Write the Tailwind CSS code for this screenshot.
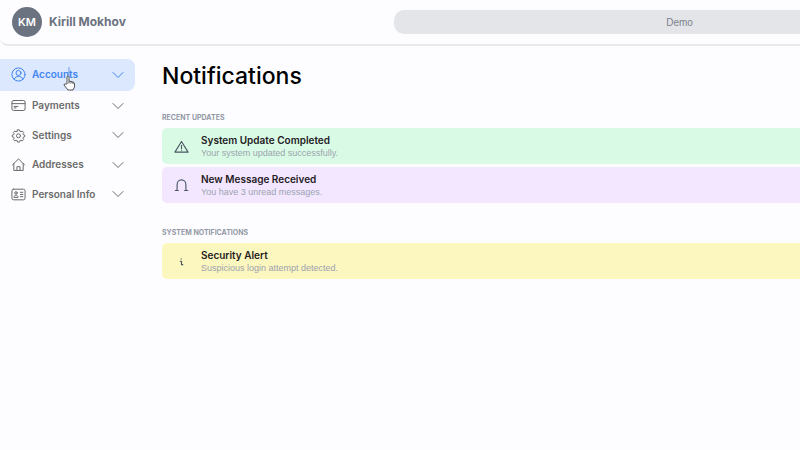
<!DOCTYPE html>
<html lang="en">
<head>
<meta charset="utf-8">
<meta name="viewport" content="width=device-width, initial-scale=1">
<title>Notifications</title>
<script src="https://cdn.jsdelivr.net/npm/@tailwindcss/browser@4"></script>
</head>
<body class="min-h-screen overflow-x-hidden bg-[#fdfdff] font-['Inter',sans-serif]">
<header class="flex h-[46px] items-center overflow-hidden rounded-bl-lg border-b-2 border-b-[#e8e9ed] pl-3">
  <div class="flex w-[382px] shrink-0 items-center gap-[7px]">
    <span class="flex size-[30px] items-center justify-center rounded-full bg-[#6b7280] text-[11px] font-semibold text-white">KM</span>
    <span class="text-[12px] font-bold text-[#6b7280]">Kirill Mokhov</span>
  </div>
  <button type="button" class="h-6 w-[571px] shrink-0 rounded-[10px] bg-[#e4e5e9] text-center font-['Liberation_Sans',sans-serif] text-[10px] text-[#7b818e]">Demo</button>
</header>
<div class="flex pt-[13px]">
  <nav class="w-[135px] shrink-0 text-[10px] font-semibold text-[#6b6b6b]" aria-label="Main">
    <button type="button" class="flex h-8 w-full cursor-pointer items-center rounded-r-lg bg-[#dbe8fe] pr-[11px] pb-px pl-[11px] text-[#4285f0]">
      <svg class="mr-[6px] size-[15px]" viewBox="0 0 24 24" fill="none" stroke="currentColor" stroke-width="1.6" stroke-linecap="round" stroke-linejoin="round"><circle cx="12" cy="12" r="10.5"/><circle cx="12" cy="9.5" r="4"/><path d="M5 19.500c1.500-3 4-4.500 7-4.500s5.500 1.500 7 4.500"/></svg>
      <span>Accounts</span>
      <svg class="ml-auto h-2 w-3" viewBox="0 0 12 8" fill="none" stroke="currentColor" stroke-linecap="round" stroke-linejoin="round"><path d="M1 1.500l5 5 5-5"/></svg>
    </button>
    <button type="button" class="flex h-[29px] w-full cursor-pointer items-center pr-[11px] pl-[11px]">
      <svg class="mr-[6px] size-[15px]" viewBox="0 0 24 24" fill="none" stroke="currentColor" stroke-width="1.6" stroke-linecap="round" stroke-linejoin="round"><rect x="1.500" y="4" width="21" height="16" rx="2.500"/><path d="M1.500 9h21M5 13.500h6M5 16h3"/></svg>
      <span>Payments</span>
      <svg class="ml-auto h-2 w-3" viewBox="0 0 12 8" fill="none" stroke="currentColor" stroke-linecap="round" stroke-linejoin="round"><path d="M1 1.500l5 5 5-5"/></svg>
    </button>
    <button type="button" class="flex h-[30px] w-full cursor-pointer items-center pr-[11px] pl-[11px]">
      <svg class="mr-[6px] size-[15px]" viewBox="0 0 24 24" fill="none" stroke="currentColor" stroke-width="1.6" stroke-linecap="round" stroke-linejoin="round"><path d="M10.300 3h3.400l.5 2.300 1.800.8 2-1.300 2.300 2.300-1.300 2 .8 1.800 2.200.5v2.700l-2.200.5-.8 1.800 1.300 2-2.300 2.300-2-1.300-1.800.8-.5 2.300h-3.400l-.5-2.300-1.800-.8-2 1.300-2.300-2.300 1.300-2-.8-1.800-2.200-.5v-2.700l2.200-.5.8-1.800-1.300-2 2.300-2.300 2 1.300 1.800-.8z"/><circle cx="12" cy="12.500" r="3.200"/></svg>
      <span>Settings</span>
      <svg class="ml-auto h-2 w-3" viewBox="0 0 12 8" fill="none" stroke="currentColor" stroke-linecap="round" stroke-linejoin="round"><path d="M1 1.500l5 5 5-5"/></svg>
    </button>
    <button type="button" class="flex h-[29px] w-full cursor-pointer items-center pr-[11px] pl-[11px]">
      <svg class="mr-[6px] size-[15px]" viewBox="0 0 24 24" fill="none" stroke="currentColor" stroke-width="1.6" stroke-linecap="round" stroke-linejoin="round"><path d="M2.500 12.500L12 3l9.500 9.500M4.500 10.500V21.500h15V10.500M9.500 21.500v-6h5v6"/></svg>
      <span>Addresses</span>
      <svg class="ml-auto h-2 w-3" viewBox="0 0 12 8" fill="none" stroke="currentColor" stroke-linecap="round" stroke-linejoin="round"><path d="M1 1.500l5 5 5-5"/></svg>
    </button>
    <button type="button" class="flex h-[30px] w-full cursor-pointer items-center pr-[11px] pl-[11px]">
      <svg class="mr-[6px] size-[15px]" viewBox="0 0 24 24" fill="none" stroke="currentColor" stroke-width="1.6" stroke-linecap="round" stroke-linejoin="round"><rect x="1.500" y="3.500" width="21" height="17" rx="2.500"/><circle cx="8" cy="9.500" r="2"/><path d="M4.800 16c.4-2 1.600-3 3.200-3s2.800 1 3.200 3zM15 8.500h4M15 12h4M15 15.500h4"/></svg>
      <span>Personal Info</span>
      <svg class="ml-auto h-2 w-3" viewBox="0 0 12 8" fill="none" stroke="currentColor" stroke-linecap="round" stroke-linejoin="round"><path d="M1 1.500l5 5 5-5"/></svg>
    </button>
  </nav>
  <main class="min-w-0 flex-1 pl-[27px]">
    <h1 class="text-[23px] leading-[34px] font-medium text-black">Notifications</h1>
    <section class="mt-[18px]">
      <h2 class="text-[7px] leading-[14px] font-bold text-[#9298a5]">RECENT UPDATES</h2>
      <ul class="mt-[3px] flex flex-col gap-[3px]">
        <li class="flex h-[36px] items-center rounded-l-[5px] bg-[#d9fbe5] pl-3">
          <svg class="mr-3 size-[15px] text-[#4b5563]" viewBox="0 0 24 24" fill="none" stroke="currentColor" stroke-width="1.800" stroke-linecap="round" stroke-linejoin="round"><path d="M12 4L1.500 21h21zM12 10v5M12 17.500v.5"/></svg>
          <div><h3 class="text-[10px] leading-[14px] font-semibold text-[#1f2023]">System Update Completed</h3>
          <p class="font-['Liberation_Sans',sans-serif] text-[9px] leading-[12px] text-[#9ca3af]">Your system updated successfully.</p></div>
        </li>
        <li class="flex h-[36px] items-center rounded-l-[5px] bg-[#f3e7ff] pl-3">
          <svg class="mr-3 size-[15px] text-[#4b5563]" viewBox="0 0 24 24" fill="none" stroke="currentColor" stroke-width="1.800" stroke-linecap="round" stroke-linejoin="round"><path d="M2 20H7M17 20h5M4.500 20Q5 18 5 15V10.500a7 7.500 0 0 1 14 0V15q0 3 .5 5"/></svg>
          <div><h3 class="text-[10px] leading-[14px] font-semibold text-[#1f2023]">New Message Received</h3>
          <p class="font-['Liberation_Sans',sans-serif] text-[9px] leading-[12px] text-[#9ca3af]">You have 3 unread messages.</p></div>
        </li>
      </ul>
    </section>
    <section class="mt-[23px]">
      <h2 class="text-[7px] leading-[14px] font-bold text-[#9298a5]">SYSTEM NOTIFICATIONS</h2>
      <ul class="mt-[3px] flex flex-col gap-[3px]">
        <li class="flex h-[36px] items-center rounded-l-[5px] bg-[#fcf6bf] pl-3">
          <svg class="mr-3 size-[15px] text-[#4b5563]" viewBox="0 0 24 24" fill="none" stroke="currentColor" stroke-width="1.800" stroke-linecap="round" stroke-linejoin="round"><path d="M11.500 7.500v.5M10 11.500h2v5.500h2"/></svg>
          <div><h3 class="text-[10px] leading-[14px] font-semibold text-[#1f2023]">Security Alert</h3>
          <p class="font-['Liberation_Sans',sans-serif] text-[9px] leading-[12px] text-[#9ca3af]">Suspicious login attempt detected.</p></div>
        </li>
      </ul>
    </section>
  </main>
</div>
<svg class="pointer-events-none absolute top-[75px] left-[63px] h-[16px] w-[12px]" viewBox="0 0 12 16" fill="#fff" stroke="#555" stroke-width="1" stroke-linejoin="round" aria-hidden="true"><path d="M4 9V2a1 1 0 0 1 2 0v4l4 1q1.500.5 1.500 2v3l-1.500 3H5L1 10q0-1.500 1.500-1z"/><path d="M6 6v2.500M8 6.500v2M10 7v2"/></svg>
<svg class="pointer-events-none absolute top-[67px] left-[68px] h-[10px] w-[2px]" viewBox="0 0 2 10" stroke="#6f9be8" aria-hidden="true"><path d="M1 0v10"/></svg>
</body>
</html>
